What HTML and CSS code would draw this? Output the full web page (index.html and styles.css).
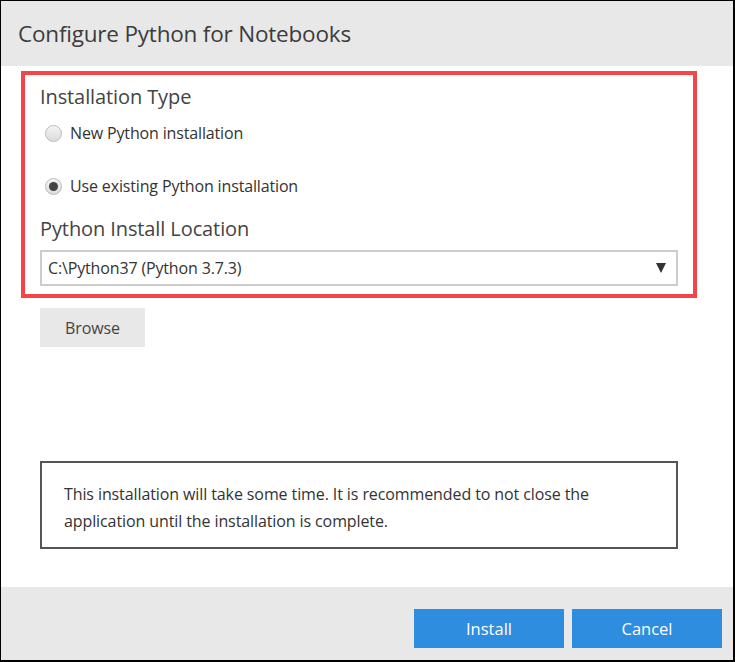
FILE: index.html
```html
<!DOCTYPE html>
<html>
<head>
<meta charset="utf-8">
<link rel="stylesheet" href="styles.css">
</head>
<body>
<div class="dialog">
  <div class="header"><h1 class="title">Configure Python for Notebooks</h1></div>
  <div class="content">
    <div class="highlight">
      <div class="heading first">Installation Type</div>
      <label class="radio-row row1"><span class="radio"></span><span>New Python installation</span></label>
      <label class="radio-row row2"><span class="radio checked"></span><span>Use existing Python installation</span></label>
      <div class="heading second">Python Install Location</div>
      <div class="select"><span>C:\Python37 (Python 3.7.3)</span><span class="arrow"></span></div>
    </div>
    <div class="browse">Browse</div>
    <div class="notice">This installation will take some time. It is recommended to not close the application until the installation is complete.</div>
  </div>
  <div class="footer">
    <div class="btn">Install</div>
    <div class="btn">Cancel</div>
  </div>
</div>
</body>
</html>
```
FILE: styles.css
```css
html, body { margin: 0; padding: 0; background: #fff; }
body { font-family: "Open Sans", "Noto Sans", sans-serif; color: #333; }
.dialog {
  width: 735px; height: 662px; box-sizing: border-box;
  border-style: solid; border-color: #000;
  border-width: 1px 2px 2px 1px;
  display: flex; flex-direction: column;
}
.header { height: 65px; background: #e8e8e8; display: flex; align-items: center; padding-left: 17px; }
.title { margin: 0; font-size: 22.5px; font-weight: 400; color: #3c3c3c; letter-spacing: -0.2px; }
.content { flex: 1; padding: 5px 0 0 20px; display: flex; flex-direction: column; align-items: flex-start; }
.highlight {
  width: 676px; box-sizing: border-box; border: 4px solid #f5454a;
  padding: 8px 15px 8px 15px; display: flex; flex-direction: column;
}
.heading { font-size: 20px; line-height: 28px; color: #444; letter-spacing: -0.1px; }
.heading.second { margin-top: 17px; }
.radio-row { display: flex; align-items: center; height: 24px; font-size: 16px; color: #333; letter-spacing: -0.15px; }
.row1 { margin-top: 10px; }
.row2 { margin-top: 29px; }
.radio {
  width: 17px; height: 17px; border-radius: 50%; box-sizing: border-box;
  border: 1px solid #bbb; background: linear-gradient(#f4f4f4, #dcdcdc);
  margin: 0 8px 0 5px; display: flex; align-items: center; justify-content: center;
}
.radio.checked::after { content: ""; width: 9px; height: 9px; border-radius: 50%; background: #444; }
.select {
  margin-top: 7px; height: 36px; box-sizing: border-box; border: 2px solid #ccc;
  display: flex; align-items: center; justify-content: space-between; padding: 0 8px 0 6px;
  font-size: 16px; color: #333; letter-spacing: -0.15px;
}
.arrow { width: 0; height: 0; border-left: 5px solid transparent; border-right: 5px solid transparent; border-top: 10px solid #333; margin-right: 2px; }
.browse {
  margin: 10px 0 0 19px; width: 105px; height: 39px; background: #e8e8e8;
  display: flex; align-items: center; justify-content: center; font-size: 16px; color: #444; letter-spacing: -0.1px;
}
.notice {
  margin: 114px 0 0 19px; width: 638px; height: 88px; box-sizing: border-box;
  border: 2px solid #555; padding: 18px 20px 0 22px; font-size: 16px; line-height: 27px; color: #333; letter-spacing: -0.1px;
}
.footer { height: 73px; background: #e8e8e8; display: flex; justify-content: flex-end; align-items: flex-start; padding: 22px 11px 0 0; box-sizing: border-box; gap: 8px; }
.btn {
  width: 150px; height: 39px; background: #2e8ddf; color: #fff; font-size: 16.5px;
  display: flex; align-items: center; justify-content: center; box-sizing: border-box;
}
```
